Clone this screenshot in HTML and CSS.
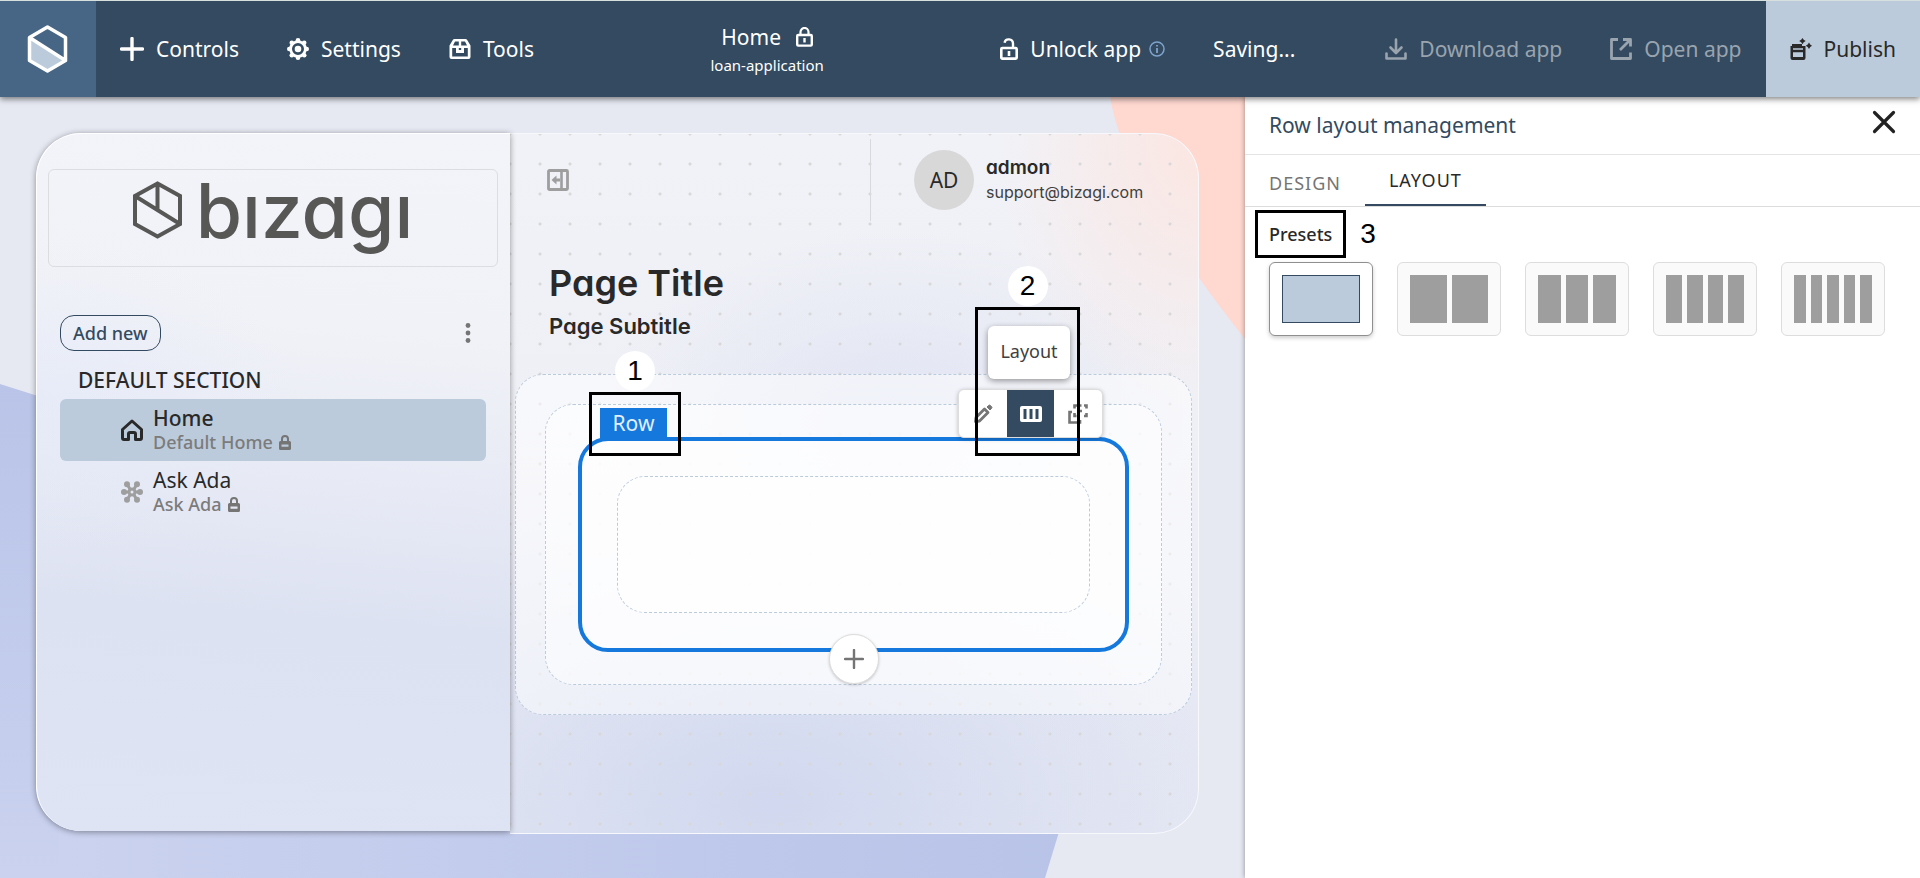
FILE: index.html
```html
<!DOCTYPE html>
<html lang="en">
<head>
<meta charset="utf-8">
<title>Home - loan-application</title>
<link rel="stylesheet" href="styles.css">
</head>
<body>
<svg width="0" height="0" class="defs" aria-hidden="true">
  <symbol id="lock-solid" viewBox="0 0 12 15"><path fill-rule="evenodd" d="M6 0a4 4 0 0 0-4 4v2H1.500a1.500 1.500 0 0 0-1.500 1.500v6A1.500 1.500 0 0 0 1.500 15h9a1.500 1.500 0 0 0 1.500-1.500v-6A1.500 1.500 0 0 0 10.500 6H10V4a4 4 0 0 0-4-4zM4 6V4a2 2 0 0 1 4 0v2zM2.500 9.500h7v2.200h-7z"/></symbol>
</svg>
<header class="topbar">
  <a class="brand" href="#" aria-label="Studio home">
    <svg width="44" height="50" viewBox="0 0 44 50"><path d="M4 14 41 37 22 46 4 37z" fill="#bbcbdc"/><path d="M21.500 3 39.500 13.500V36.500L21.500 47 3.500 36.500V13.500zM3.500 13.500 39.500 36.500" fill="none" stroke="#fff" stroke-width="3.500" stroke-linejoin="round"/></svg>
  </a>
  <nav class="topbar-nav">
    <button class="tool" type="button"><svg width="24" height="24" viewBox="0 0 24 24"><path d="M12 1.500v21M1.500 12h21" stroke="currentColor" stroke-width="3.400" stroke-linecap="round"/></svg>Controls</button>
    <button class="tool" type="button"><svg width="22" height="22" viewBox="0 0 22 22"><g fill="currentColor"><circle cx="11" cy="11" r="7.400" fill="none" stroke="currentColor" stroke-width="2.800"/><circle cx="11" cy="11" r="3.300"/><circle cx="11" cy="2.300" r="2.300"/><circle cx="17.200" cy="4.800" r="2.300"/><circle cx="19.700" cy="11" r="2.300"/><circle cx="17.200" cy="17.200" r="2.300"/><circle cx="11" cy="19.700" r="2.300"/><circle cx="4.800" cy="17.200" r="2.300"/><circle cx="2.300" cy="11" r="2.300"/><circle cx="4.800" cy="4.800" r="2.300"/></g></svg>Settings</button>
    <button class="tool" type="button"><svg width="22" height="22" viewBox="0 0 22 22"><path fill="currentColor" fill-rule="evenodd" d="M5.500 1h11a2 2 0 0 1 1.700 1L21.500 7.500V19a2 2 0 0 1-2 2h-17a2 2 0 0 1-2-2V7.500L3.800 2a2 2 0 0 1 1.700-1zM6 3.500 4 7.500H9.800v-4zM12.200 3.500v4H18l-2-4zM3.200 10v8.400h15.600V10H15v5H7v-5zM9.800 10v2h2.400v-2z"/></svg>Tools</button>
  </nav>
  <div class="doc">
    <div class="doc-name">Home <svg width="17" height="20" viewBox="0 0 17 20"><path d="M4.500 8V5a4 4 0 0 1 8 0v3" fill="none" stroke="currentColor" stroke-width="2.200"/><rect x="1.200" y="8" width="14.600" height="10.600" rx="1" fill="none" stroke="currentColor" stroke-width="2.400"/><path d="M8.500 11v4.500" stroke="currentColor" stroke-width="2.400"/></svg></div>
    <div class="doc-app">loan-application</div>
  </div>
  <div class="topbar-status">
    <button class="tool" type="button"><svg width="18" height="22" viewBox="0 0 18 22"><path d="M4.500 4.800a4.300 4.300 0 0 1 8.500.700V10" fill="none" stroke="currentColor" stroke-width="2.400"/><rect x="1.300" y="10" width="15.400" height="10.600" rx="1" fill="none" stroke="currentColor" stroke-width="2.600"/><path d="M9 13v5" stroke="currentColor" stroke-width="2.600"/></svg>Unlock app<svg class="info" width="16" height="16" viewBox="0 0 16 16"><circle cx="8" cy="8" r="7" fill="none" stroke="currentColor" stroke-width="1.500"/><path d="M8 7v5M8 4v1.600" stroke="currentColor" stroke-width="1.800"/></svg></button>
    <span>Saving...</span>
  </div>
  <div class="topbar-actions">
    <button class="tool" type="button" disabled><svg width="22" height="22" viewBox="0 0 22 22"><path d="M11 1.500v13M5.500 9.500 11 15 16.500 9.500M1.500 15.500v5h19v-5" fill="none" stroke="currentColor" stroke-width="2.600" stroke-linecap="round" stroke-linejoin="round"/></svg>Download app</button>
    <button class="tool" type="button" disabled><svg width="22" height="22" viewBox="0 0 22 22"><path d="M8 1.500H1.500v19h19V14.500M13 1.500h7.500V8.500M19.500 2.500 10 12" fill="none" stroke="currentColor" stroke-width="2.800" stroke-linejoin="round"/></svg>Open app</button>
  </div>
  <button class="tool publish" type="button"><svg width="22" height="22" viewBox="0 0 22 22"><path fill-rule="evenodd" fill="currentColor" d="M2 6h10v2h3.500v12a2 2 0 0 1-2 2h-11a2 2 0 0 1-2-2V8H2zM3 10.300v1.500h10v-1.500zM3 14.300V19h10v-4.700zM12.500 0l1.200 1.800 2 1.200-2 1.300-1.200 2-1.300-2-2-1.300 2-1.200zM19 4.500l1.200 2L22 7.800l-1.800 1.200-1.200 2-1.300-2-2-1.200 2-1.300z"/></svg>Publish</button>
</header>

<div class="workspace">
  <main class="stage">
    <svg class="backdrop" viewBox="0 0 1245 781" preserveAspectRatio="none" aria-hidden="true">
      <defs>
        <linearGradient id="lav-side" x1="0" y1="0" x2="0" y2="1"><stop offset="0" stop-color="#b9c4e8"/><stop offset="1" stop-color="#cad2ef"/></linearGradient>
        <linearGradient id="lav-base"><stop offset="0" stop-color="#cad2ef"/><stop offset="1" stop-color="#b8c3e8"/></linearGradient>
      </defs>
      <path d="M0 287 60 306V781H0z" fill="url(#lav-side)"/>
      <path d="M59 600 1100 600 1045 781H59z" fill="url(#lav-base)"/>
      <path d="M1110 0Q1126 92 1245 242V0z" fill="#ffd8d0"/>
    </svg>
    <div class="app">
      <aside class="sidebar">
        <div class="logo">
          <svg width="49" height="58" viewBox="0 0 49 58"><path d="M24.500 2.500 47 15V43L24.500 55.500 2 43V15zM2 15 47 43M24.500 2.500V29" fill="none" stroke="#575756" stroke-width="4"/></svg>
          <span>bızagı</span>
        </div>
        <div class="sidebar-tools">
          <button class="add" type="button">Add new</button>
          <button class="kebab" type="button" aria-label="More options"><svg width="16" height="22" viewBox="0 0 16 22"><g fill="#757575"><circle cx="8" cy="3.500" r="2.400"/><circle cx="8" cy="11" r="2.400"/><circle cx="8" cy="18.500" r="2.400"/></g></svg></button>
        </div>
        <h2 class="section-name">DEFAULT SECTION</h2>
        <nav class="pages">
          <a class="page current" href="#">
            <svg width="22" height="22" viewBox="0 0 22 22"><path d="M11 2 1.500 10.500V19a1.500 1.500 0 0 0 1.500 1.500H7.500V15A1.500 1.500 0 0 1 9 13.500h4a1.500 1.500 0 0 1 1.500 1.500v5.500H19a1.500 1.500 0 0 0 1.500-1.500V10.500z" fill="none" stroke="#292929" stroke-width="3" stroke-linejoin="round"/></svg>
            <span class="page-text"><span class="page-name">Home</span><span class="page-sub">Default Home <svg width="12" height="15"><use href="#lock-solid"/></svg></span></span>
          </a>
          <a class="page" href="#">
            <svg width="22" height="22" viewBox="0 0 22 22"><g stroke="#9e9e9e" stroke-width="3" fill="#9e9e9e"><path d="M3 11h5M14 11h5M6 3l3.500 6M12.500 13l3.500 6M16 3l-3.500 6M9.500 13 6 19"/><circle cx="11" cy="11" r="3" fill="none"/><g stroke="none"><circle cx="3" cy="11" r="3"/><circle cx="19" cy="11" r="3"/><circle cx="6" cy="3.300" r="3"/><circle cx="16" cy="3.300" r="3"/><circle cx="6" cy="18.700" r="3"/><circle cx="16" cy="18.700" r="3"/></g></g></svg>
            <span class="page-text"><span class="page-name">Ask Ada</span><span class="page-sub">Ask Ada <svg width="12" height="15"><use href="#lock-solid"/></svg></span></span>
          </a>
        </nav>
      </aside>
      <section class="content">
        <div class="content-head">
          <button class="collapse" type="button" aria-label="Collapse menu"><svg width="22" height="22" viewBox="0 0 22 22"><rect x="1.500" y="1.500" width="19" height="19" rx="1" fill="none" stroke="#9e9e9e" stroke-width="2.800"/><path d="M14.500 1v20" stroke="#9e9e9e" stroke-width="2.600"/><path d="M4.500 11 9.500 6.500v3H13v3H9.500v3z" fill="#9e9e9e"/></svg></button>
          <div class="user">
            <span class="avatar">AD</span>
            <div><div class="user-name">admon</div><div class="user-mail">support@bizagi.com</div></div>
          </div>
        </div>
        <h1>Page Title</h1>
        <h2 class="subtitle">Page Subtitle</h2>
        <div class="drop outer">
          <div class="drop">
            <div class="row">
              <span class="row-label">Row</span>
              <div class="mark mark-row"><b>1</b></div>
              <div class="row-tools">
                <button type="button" aria-label="Edit"><svg width="20" height="20" viewBox="0 0 20 20"><path d="M2.500 17.500 3 13.500 11.500 5 15 8.500 6.500 17z" fill="none" stroke="#757575" stroke-width="2.800" stroke-linejoin="round"/><path d="M14 3 15.500 1.500a1.500 1.500 0 0 1 2 0l1 1a1.500 1.500 0 0 1 0 2L17 6z" fill="#757575" stroke="#757575"/></svg></button>
                <button class="active" type="button" aria-label="Layout"><svg width="22" height="16" viewBox="0 0 22 16"><path fill="#fff" fill-rule="evenodd" d="M2 0h18a2 2 0 0 1 2 2v12a2 2 0 0 1-2 2H2a2 2 0 0 1-2-2V2a2 2 0 0 1 2-2zM3.500 3v10h3V3zM9.500 3v10h3V3zM15.500 3v10h3V3z"/></svg></button>
                <button type="button" aria-label="Move"><svg width="20" height="20" viewBox="0 0 20 20"><g fill="none" stroke="#757575" stroke-width="2.600"><path d="M4 8H1.500V18.500H12V16M6.500 4.500V1.500H9M16 1.500h2.500V4.500M18.500 9v3H16M8.500 12H6.500V9"/><path d="M11.500 1.500h2M11 7h3"/></g></svg></button>
                <span class="tip">Layout</span>
                <div class="mark mark-layout"><b>2</b></div>
              </div>
              <div class="drop cell"></div>
              <button class="plus" type="button" aria-label="Add row"><svg width="20" height="20" viewBox="0 0 20 20"><path d="M10 1v18M1 10h18" stroke="#757575" stroke-width="2.400" stroke-linecap="round"/></svg></button>
            </div>
          </div>
        </div>
      </section>
    </div>
  </main>

  <aside class="panel">
    <div class="panel-head">
      <h2>Row layout management</h2>
      <button class="close" type="button" aria-label="Close"><svg width="24" height="24" viewBox="0 0 24 24"><path d="M2.500 2.500l19 19M21.500 2.500l-19 19" stroke="#222" stroke-width="3.200" stroke-linecap="round"/></svg></button>
    </div>
    <div class="tabs">
      <button type="button">DESIGN</button>
      <button class="selected" type="button">LAYOUT</button>
    </div>
    <div class="presets-title"><h3>Presets</h3><b>3</b></div>
    <div class="presets">
      <button class="chosen" type="button" aria-label="One column"><i></i></button>
      <button type="button" aria-label="Two columns"><i></i><i></i></button>
      <button type="button" aria-label="Three columns"><i></i><i></i><i></i></button>
      <button type="button" aria-label="Four columns"><i></i><i></i><i></i><i></i></button>
      <button type="button" aria-label="Five columns"><i></i><i></i><i></i><i></i><i></i></button>
    </div>
  </aside>
</div>
</body>
</html>
```
FILE: styles.css
```css
* { box-sizing: border-box; }
body {
  margin: 0;
  min-height: 100vh;
  display: flex;
  flex-direction: column;
  font-family: "Noto Sans", "Open Sans", sans-serif;
  font-size: 21px;
  line-height: 24px;
  color: #292929;
}
button { font: inherit; letter-spacing: inherit; color: inherit; background: none; border: 0; padding: 0; margin: 0; cursor: pointer; }
a { color: inherit; text-decoration: none; }
h1, h2, h3 { margin: 0; font-weight: 500; font-size: inherit; }
svg { display: block; flex: none; }
.defs { position: absolute; }

.topbar {
  display: flex;
  height: 97px;
  flex: none;
  border-top: 1px solid #d8e0dd;
  background: #334a60;
  color: #fff;
  position: relative;
  z-index: 2;
  box-shadow: 0 2px 6px rgba(0, 0, 0, .5);
}
.brand { width: 96px; display: grid; place-items: center; background: #476685; }
.tool { display: flex; align-items: center; gap: 12px; white-space: nowrap; }
.tool:disabled { color: #99a4af; }
.topbar-nav, .topbar-status, .topbar-actions { display: flex; gap: 48px; align-items: center; }
.topbar-nav { margin-left: 24px; }
.topbar-actions { margin: 0 24px 0 90px; }
.info { color: #7fa3cb; margin-left: -4px; }
.doc { flex: 1; display: flex; flex-direction: column; align-items: center; justify-content: center; gap: 4px; padding-top: 4px; }
.doc-name { display: flex; gap: 15px; align-items: center; }
.doc-app { font-size: 15px; }
.publish { background: #bbcbdc; color: #292929; padding: 0 24px; }

.workspace { flex: 1; display: flex; }
.stage { flex: 1; position: relative; background: #e6e9f2; padding: 36px 46px 44px 36px; display: flex; }
.backdrop { position: absolute; inset: 0; width: 100%; height: 100%; }
.app { position: relative; flex: 1; display: flex; }

.sidebar {
  width: 474px;
  margin-bottom: 3px;
  border-radius: 45px 0 0 45px;
  border-top: 1px solid #fff;
  border-left: 1px solid #fff;
  background:
    radial-gradient(ellipse 260px 160px at 0 38%, rgba(228, 234, 249, .6), transparent),
    linear-gradient(185deg, #f3f4f9 0, #f1f2f7 28%, #e7eaf5 50%, #dde2f2 68%, #dfe4f4 100%);
  box-shadow: 0 1px 6px rgba(0, 0, 0, .4);
  padding: 35px 12px 0 11px;
  z-index: 1;
}
.logo {
  display: flex;
  justify-content: center;
  gap: 14px;
  height: 98px;
  padding-top: 11px;
  border: 1px solid #dcdde0;
  border-radius: 6px;
  font: 500 75px/60px Inter, sans-serif;
  font-feature-settings: "cv11";
  color: #575756;
}
.sidebar-tools { display: flex; justify-content: space-between; align-items: center; padding: 0 22px 0 12px; margin-top: 48px; }
.add { height: 36px; padding: 0 12px; border: 1px solid #334a60; border-radius: 14px; color: #334a60; font-size: 18px; font-weight: 500; }
.section-name { padding: 17px 30px 7px; }
.pages { padding: 0 12px; }
.page { display: flex; align-items: center; gap: 10px; height: 62px; padding-left: 61px; border-radius: 6px; }
.current { background: #bbcbdc; }
.page-name, .page-sub { display: flex; }
.page-sub { font-size: 18px; font-weight: 500; color: #7b7b7b; gap: 6px; align-items: center; }
.page-sub svg { fill: #757575; }
.current .page-name { font-weight: 500; }

.content {
  flex: 1;
  padding: 5px 6px 0 5px;
  border-radius: 0 45px 45px 0;
  border: 1px solid #f7f8fb;
  border-left: 0;
  font-family: Inter, sans-serif;
  font-feature-settings: "cv11";
  background:
    radial-gradient(circle at 50% 50%, #d8d8d8 1px, transparent 2px) -15px -15px / 30px 30px,
    radial-gradient(ellipse 200px 260px at 100% 2%, #fbe6e2, transparent),
    radial-gradient(ellipse 300px 200px at 56% 42%, #e0e4f3, transparent),
    radial-gradient(ellipse 560px 330px at 38% 96%, #d1d8ef, transparent),
    linear-gradient(#f1f2f7, #eff0f6 40%, #e9ebf4);
}
.content-head { display: flex; justify-content: space-between; align-items: center; height: 82px; padding-left: 32px; }
.user { display: flex; align-items: center; gap: 12px; width: 322px; height: 82px; border-left: 1px solid #d8d9dd; padding-left: 43px; line-height: 24px; }
.avatar { width: 60px; height: 60px; border-radius: 50%; background: #d8d8d8; display: grid; place-items: center; font-family: "Noto Sans", sans-serif; }
.user-name { font-weight: 600; font-size: 19px; }
.user-mail { font-size: 16px; color: #404040; }
.content h1 { font-size: 36px; line-height: 44px; font-weight: 600; padding: 40px 0 0 34px; }
.content .subtitle { font-size: 22px; line-height: 28px; font-weight: 600; padding: 7px 0 0 34px; }

.drop { border: 1px dashed #bbcbdc; border-radius: 28px; background: rgba(255, 255, 255, .5); padding: 32px; }
.outer { margin-top: 34px; padding: 29px; }
.row { position: relative; border: 4px solid #1478dc; border-radius: 30px; background: rgba(255, 255, 255, .5); padding: 35px; }
.cell { height: 137px; }
.row-label { position: absolute; left: 18px; top: -33px; width: 67px; height: 32px; line-height: 31px; background: #1478dc; color: #e3effb; text-align: center; font-family: "Noto Sans", sans-serif; }
.mark { position: absolute; border: 3px solid #000; pointer-events: none; }
.mark b, .presets-title b { font: 400 28px/40px "Liberation Sans", Arial, sans-serif; color: #000; }
.mark b { position: absolute; bottom: calc(100% + 4px); left: 50%; width: 40px; height: 40px; margin-left: -20px; border-radius: 50%; background: #fff; text-align: center; }
.mark-row { left: 7px; top: -49px; width: 92px; height: 64px; }
.row-tools { position: absolute; right: 22px; top: -52px; width: 145px; height: 49px; display: flex; background: #fff; border: 1px solid #ddd; border-radius: 6px; box-shadow: 0 1px 4px rgba(0, 0, 0, .25); font-family: "Noto Sans", sans-serif; }
.row-tools button { flex: 1; display: grid; place-items: center; }
.active { background: #334a60; }
.row-tools .active { background: #334a60; }
.tip { position: absolute; left: 29px; bottom: 58px; width: 82px; height: 53px; background: #fff; border-radius: 6px; box-shadow: 0 2px 6px rgba(0, 0, 0, .4); text-align: center; font-size: 18px; line-height: 50px; color: #404040; }
.mark-layout { left: 16px; top: -83px; width: 105px; height: 149px; }
.plus { position: absolute; left: 50%; bottom: -36px; width: 50px; height: 50px; margin-left: -25px; border: 1px solid #ddd; border-radius: 50%; background: #fff; display: grid; place-items: center; box-shadow: 0 1px 3px rgba(0, 0, 0, .2); }

.panel { width: 675px; background: #fff; position: relative; z-index: 1; box-shadow: 0 0 5px rgba(0, 0, 0, .4); }
.panel-head { display: flex; justify-content: space-between; height: 58px; padding: 16px 24px 0; border-bottom: 1px solid #e4e4e4; color: #334a60; }
.panel-head h2 { font-weight: 400; }
.close { align-self: flex-start; margin-top: -3px; }
.tabs { display: flex; height: 52px; border-bottom: 1px solid #dcdcdc; font-size: 18px; letter-spacing: 1px; color: #757575; }
.tabs button { padding: 4px 24px 0; }
.tabs .selected { padding-top: 0; color: #292929; border-bottom: 2px solid #334a60; }
.presets-title { display: flex; align-items: center; gap: 14px; padding: 3px 0 0 10px; }
.presets-title h3 { border: 3px solid #000; padding: 9px 11px; font-size: 18px; }
.presets { display: flex; gap: 24px; padding: 4px 24px; }
.presets button { width: 104px; height: 74px; display: flex; gap: 5px; padding: 12px; border: 1px solid #ddd; border-radius: 6px; background: #fafafa; }
.presets i { flex: 1; height: 48px; background: #9e9e9e; }
.presets .chosen { background: #fff; border-color: #8f8f8f; box-shadow: 0 2px 4px rgba(0, 0, 0, .2); }
.chosen i { background: #bbcbdc; border: 1px solid #334a60; }
```
